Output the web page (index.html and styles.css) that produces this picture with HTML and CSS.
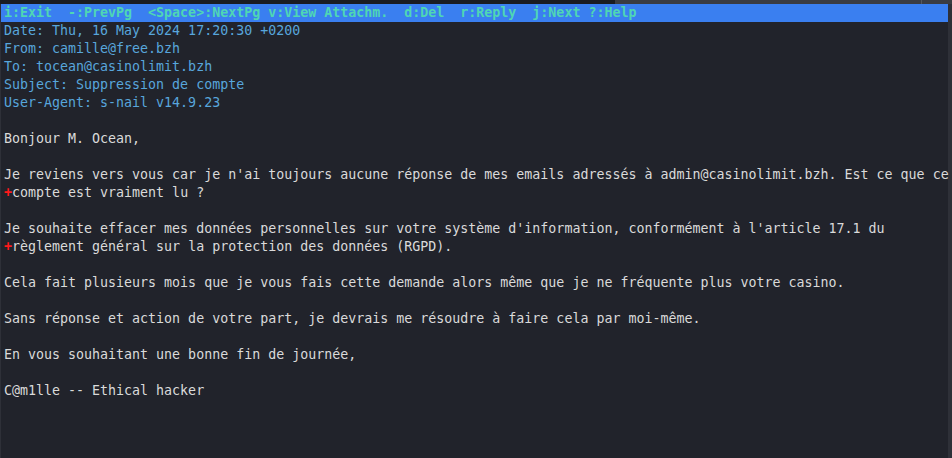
FILE: index.html
```html
<!DOCTYPE html>
<html lang="fr">
<head>
<meta charset="utf-8">
<title>s-nail pager</title>
<link rel="stylesheet" href="styles.css">
</head>
<body>
<div class="topstrip"><span class="tab-a"></span><span class="tab-b"></span><span class="tab-c"></span></div>
<div class="term">
<div class="statusbar">i:Exit  -:PrevPg  &lt;Space&gt;:NextPg v:View Attachm.  d:Del  r:Reply  j:Next ?:Help</div>
<pre class="headers">Date: Thu, 16 May 2024 17:20:30 +0200
From: camille@free.bzh
To: tocean@casinolimit.bzh
Subject: Suppression de compte
User-Agent: s-nail v14.9.23</pre>
<div class="gap"></div>
<pre class="body">Bonjour M. Ocean,

Je reviens vers vous car je n'ai toujours aucune réponse de mes emails adressés à admin@casinolimit.bzh. Est ce que ce
<span class="wrap">+</span>compte est vraiment lu ?

Je souhaite effacer mes données personnelles sur votre système d'information, conformément à l'article 17.1 du
<span class="wrap">+</span>règlement général sur la protection des données (RGPD).

Cela fait plusieurs mois que je vous fais cette demande alors même que je ne fréquente plus votre casino.

Sans réponse et action de votre part, je devrais me résoudre à faire cela par moi-même.

En vous souhaitant une bonne fin de journée,

C@m1lle -- Ethical hacker</pre>
</div>
</body>
</html>
```

FILE: styles.css
```css
html, body {
  margin: 0;
  padding: 0;
  background: #21232b;
  height: 100%;
  overflow: hidden;
}

.topstrip {
  display: flex;
  height: 4px;
  background: #16181d;
}
.topstrip .tab-a {
  flex: 0 0 615px;
  background: #1a1c22;
}
.topstrip .tab-b {
  flex: 0 0 306px;
  background: #3a3c42;
  border-right: 1px solid #55575c;
}
.topstrip .tab-c {
  flex: 1;
  background: #3a3c42;
}

.term {
  border-left: 1px solid #2e3038;
  border-right: 4px solid #2e3038;
  height: 454px;
  box-sizing: border-box;
  font-family: "DejaVu Sans Mono", "Liberation Mono", monospace;
  font-size: 13.3px;
  line-height: 18px;
}

.statusbar {
  background: #3a7ff0;
  color: #4fd6b4;
  font-weight: bold;
  white-space: pre;
  padding-left: 3px;
  height: 18px;
}

pre {
  margin: 0;
  font: inherit;
  white-space: pre;
  padding-left: 3px;
}

.gap {
  height: 18px;
}

.headers {
  color: #58a6dc;
}

.body {
  color: #dadada;
}

.wrap {
  color: #ff1a1a;
  font-weight: bold;
}
```
